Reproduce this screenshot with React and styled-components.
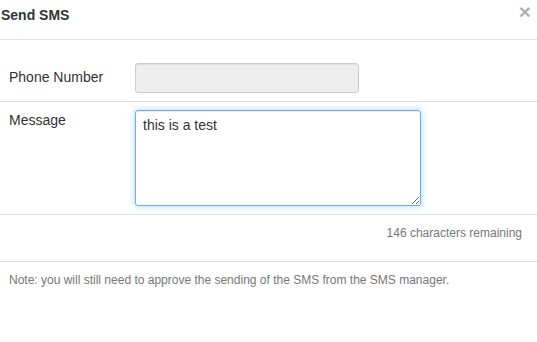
import React from "react";
import styled, { createGlobalStyle } from "styled-components";

const Global = createGlobalStyle`
  html, body { margin: 0; padding: 0; background: #fff; }
  body { font-family: "Liberation Sans", Arial, sans-serif; font-size: 14px; color: #333; }
  * { box-sizing: border-box; }
`;

const Modal = styled.div`
  width: 537px;
  height: 342px;
  background: #fff;
`;

const Header = styled.div`
  height: 40px;
  border-bottom: 1px solid #e5e5e5;
  display: flex;
  align-items: flex-start;
  justify-content: space-between;
  padding: 5px 6px 0 1px;
`;

const Title = styled.h4`
  margin: 0;
  font-size: 14px;
  font-weight: bold;
  line-height: 20px;
  color: #333;
`;

const Close = styled.button`
  border: 0;
  background: transparent;
  padding: 0;
  font-family: "Liberation Sans", Arial, sans-serif;
  font-size: 21px;
  font-weight: bold;
  line-height: 14px;
  color: #000;
  opacity: 0.3;
  cursor: pointer;
`;

const Row = styled.div`
  display: grid;
  grid-template-columns: 135px 1fr;
  align-items: start;
  padding: ${(p) => p.$top || 8}px 0 8px;
  border-bottom: 1px solid #ddd;
`;

const Label = styled.label`
  padding-left: 9px;
  line-height: 20px;
  padding-top: ${(p) => p.$pt || 0}px;
  color: #333;
`;

const Input = styled.input`
  width: 224px;
  height: 30px;
  background: #eee;
  border: 1px solid #ccc;
  border-radius: 3px;
  box-shadow: inset 0 1px 1px rgba(0, 0, 0, 0.075);
  font: inherit;
  padding: 4px 8px;
`;

const TextArea = styled.textarea`
  width: 286px;
  height: 96px;
  border: 1px solid #66afe9;
  border-radius: 3px;
  outline: 0;
  box-shadow: inset 0 1px 1px rgba(0, 0, 0, 0.075), 0 0 7px rgba(102, 175, 233, 0.55);
  font-family: "Liberation Sans", Arial, sans-serif;
  font-size: 14px;
  line-height: 20px;
  color: #333;
  padding: 4px 7px;
  resize: vertical;
`;

const Counter = styled.div`
  height: 47px;
  border-bottom: 1px solid #ddd;
  text-align: right;
  padding: 10px 15px 0 0;
  font-size: 12px;
  line-height: 17px;
  color: #777;
`;

const Note = styled.p`
  margin: 0;
  padding: 10px 0 0 9px;
  font-size: 12px;
  line-height: 17px;
  color: #777;
`;

export default function App() {
  return (
    <Modal>
      <Global />
      <Header>
        <Title>Send SMS</Title>
        <Close aria-label="Close">×</Close>
      </Header>
      <Row $top={23}>
        <Label $pt={4}>Phone Number</Label>
        <Input disabled />
      </Row>
      <Row>
        <Label $pt={0}>Message</Label>
        <TextArea defaultValue="this is a test" />
      </Row>
      <Counter>146 characters remaining</Counter>
      <Note>Note: you will still need to approve the sending of the SMS from the SMS manager.</Note>
    </Modal>
  );
}
